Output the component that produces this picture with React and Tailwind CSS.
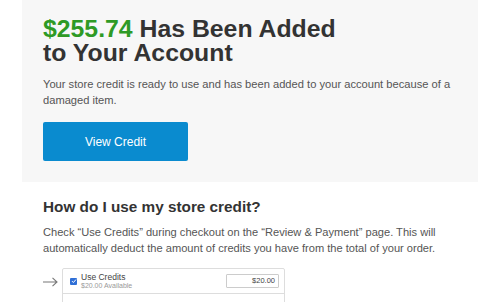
export default function App() {
  return (
    <div className="w-[500px] h-[302px] overflow-hidden bg-white" style={{ fontFamily: '"Liberation Sans", Arial, sans-serif' }}>
      <div className="mx-[22px] bg-[#f7f7f7] pt-[17px] pl-[21px] pb-[21px]">
        <h1 className="text-[24.8px] leading-[24px] font-bold text-[#333333]">
          <span className="text-[#2e9a25]">$255.74</span> Has Been Added
          <br />
          to Your Account
        </h1>
        <p className="mt-[11px] text-[11.15px] leading-[16px] text-[#555555] whitespace-nowrap">
          Your store credit is ready to use and has been added to your account because of a
          <br />
          damaged item.
        </p>
        <button className="mt-[14px] w-[145px] h-[39px] rounded-[2px] bg-[#0a8bcf] text-white text-[12px] flex items-center justify-center">
          View Credit
        </button>
      </div>
      <div className="pl-[43px]">
        <h2 className="mt-[15.5px] text-[15.3px] leading-[18px] font-bold text-[#333333]">How do I use my store credit?</h2>
        <p className="mt-[8px] text-[11.1px] leading-[16px] text-[#555555] whitespace-nowrap">
          Check “Use Credits” during checkout on the “Review &amp; Payment” page. This will
          <br />
          automatically deduct the amount of credits you have from the total of your order.
        </p>
        <div className="mt-[12.5px] flex items-start">
          <svg width="15" height="10" viewBox="0 0 15 10" className="mt-[9px] mr-[4px] shrink-0">
            <path d="M0 5 H14 M9.5 0.8 L14 5 L9.5 9.2" fill="none" stroke="#777" strokeWidth="1.1" />
          </svg>
          <div className="w-[223px] border border-[#dddddd] rounded-t-[2px] h-[40px]">
            <div className="h-[25px] border-b border-[#dddddd] flex items-center pl-[7px] pr-[5px]">
              <div className="w-[7px] h-[7px] bg-[#2f6fd6] rounded-[1px] flex items-center justify-center shrink-0">
                <svg width="6" height="6" viewBox="0 0 6 6">
                  <path d="M1 3.1 L2.4 4.5 L5 1.5" fill="none" stroke="white" strokeWidth="1" />
                </svg>
              </div>
              <div className="ml-[4px] flex flex-col">
                <span className="text-[8.5px] leading-[9px] text-[#444444]">Use Credits</span>
                <span className="text-[7px] leading-[8px] text-[#999999]">$20.00 Available</span>
              </div>
              <div className="ml-auto w-[53px] h-[14px] border border-[#cccccc] rounded-[1px] bg-white flex items-center justify-end pr-[3px] text-[7.5px] text-[#444444]">
                $20.00
              </div>
            </div>
          </div>
        </div>
      </div>
    </div>
  );
}
